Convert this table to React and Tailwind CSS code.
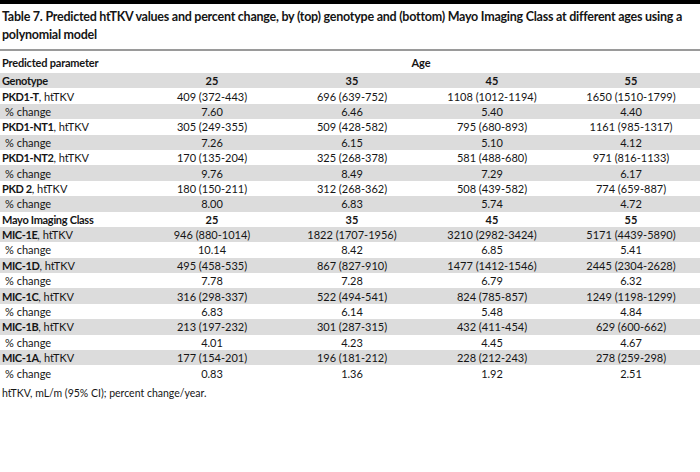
import React from "react";

const rows = [
  { label: "Genotype", bold: true, header: true, vals: ["25", "35", "45", "55"], gray: true },
  { b: "PKD1-T", vals: ["409 (372-443)", "696 (639-752)", "1108 (1012-1194)", "1650 (1510-1799)"], gray: false },
  { pc: true, vals: ["7.60", "6.46", "5.40", "4.40"], gray: true },
  { b: "PKD1-NT1", vals: ["305 (249-355)", "509 (428-582)", "795 (680-893)", "1161 (985-1317)"], gray: false },
  { pc: true, vals: ["7.26", "6.15", "5.10", "4.12"], gray: true },
  { b: "PKD1-NT2", vals: ["170 (135-204)", "325 (268-378)", "581 (488-680)", "971 (816-1133)"], gray: false },
  { pc: true, vals: ["9.76", "8.49", "7.29", "6.17"], gray: true },
  { b: "PKD 2", vals: ["180 (150-211)", "312 (268-362)", "508 (439-582)", "774 (659-887)"], gray: false },
  { pc: true, vals: ["8.00", "6.83", "5.74", "4.72"], gray: true },
  { label: "Mayo Imaging Class", header: true, vals: ["25", "35", "45", "55"], gray: false },
  { b: "MIC-1E", vals: ["946 (880-1014)", "1822 (1707-1956)", "3210 (2982-3424)", "5171 (4439-5890)"], gray: true },
  { pc: true, vals: ["10.14", "8.42", "6.85", "5.41"], gray: false },
  { b: "MIC-1D", vals: ["495 (458-535)", "867 (827-910)", "1477 (1412-1546)", "2445 (2304-2628)"], gray: true },
  { pc: true, vals: ["7.78", "7.28", "6.79", "6.32"], gray: false },
  { b: "MIC-1C", vals: ["316 (298-337)", "522 (494-541)", "824 (785-857)", "1249 (1198-1299)"], gray: true },
  { pc: true, vals: ["6.83", "6.14", "5.48", "4.84"], gray: false },
  { b: "MIC-1B", vals: ["213 (197-232)", "301 (287-315)", "432 (411-454)", "629 (600-662)"], gray: true },
  { pc: true, vals: ["4.01", "4.23", "4.45", "4.67"], gray: false },
  { b: "MIC-1A", vals: ["177 (154-201)", "196 (181-212)", "228 (212-243)", "278 (259-298)"], gray: true },
  { pc: true, vals: ["0.83", "1.36", "1.92", "2.51"], gray: false },
];

export default function App() {
  return (
    <div
      className="w-[700px] h-[472px] bg-white text-[#151515] overflow-hidden"
      style={{ fontFamily: "Lato, 'Noto Sans', sans-serif" }}
    >
      <div className="h-[4px] bg-black" />
      <div className="pl-[2px] pr-[4px] pt-[4px] text-[12.5px] font-bold leading-[18px] tracking-[-0.25px]">
        Table 7. Predicted htTKV values and percent change, by (top) genotype and (bottom) Mayo Imaging Class at different ages using a polynomial model
      </div>
      <div className="mt-[5px] h-[2px] bg-[#9a9a9a]" />
      <div className="text-[11px]">
        <div className="grid grid-cols-[142px_1fr] h-[22px] items-center pt-[3px]">
          <div className="pl-[2px] font-bold tracking-[-0.2px]">Predicted parameter</div>
          <div className="text-center font-bold">Age</div>
        </div>
        {rows.map((r, i) => (
          <div
            key={i}
            className={`grid grid-cols-[142px_140px_140px_140px_138px] h-[15.4px] items-center leading-none ${r.gray ? "bg-[#dcdcdc]" : "bg-white"}`}
          >
            <div className="pl-[2px] whitespace-nowrap">
              {r.header ? (
                <span className="font-bold tracking-[-0.3px]">{r.label}</span>
              ) : r.pc ? (
                <span className="pl-[3px]">% change</span>
              ) : (
                <>
                  <span className="font-bold tracking-[-0.4px]">{r.b}</span>, htTKV
                </>
              )}
            </div>
            {r.vals.map((v, j) => (
              <div key={j} className={`text-center whitespace-nowrap ${r.header ? "font-bold" : ""}`}>
                {v}
              </div>
            ))}
          </div>
        ))}
        <div className="pl-[2px] pt-[5px] text-[10.5px]">htTKV, mL/m (95% CI); percent change/year.</div>
      </div>
    </div>
  );
}
